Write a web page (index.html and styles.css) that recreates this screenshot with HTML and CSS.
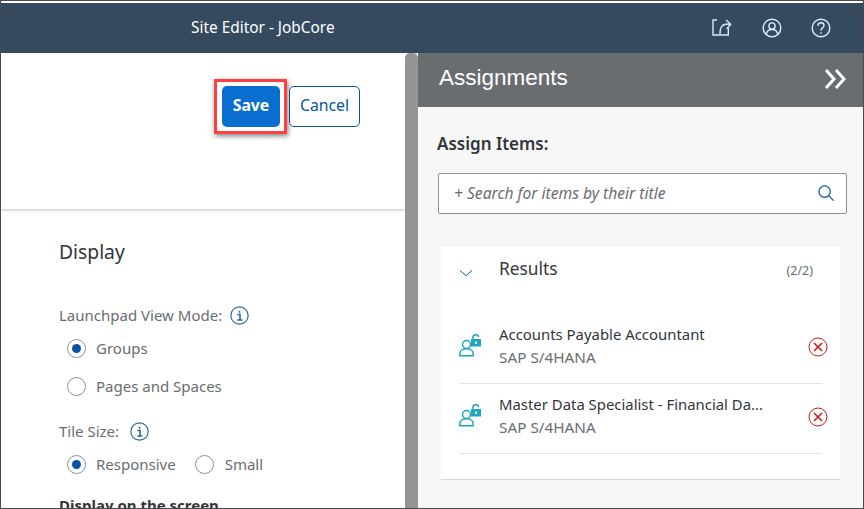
FILE: index.html
```html
<!DOCTYPE html>
<html lang="en">
<head>
    <meta charset="UTF-8">
    <meta name="viewport" content="width=device-width, initial-scale=1.0">
    <title>Site Editor - JobCore</title>
    <link rel="stylesheet" href="styles.css">
</head>
<body>
    <div class="frame">
        <header class="shell">
            <div class="shell-title">Site Editor - JobCore</div>
            <div class="shell-icons">
                <svg class="shell-icon" viewBox="0 0 20 20"><path d="M5 2H1v15h15.300v-7"/><path d="M8 16c-.3-5 1.500-9.700 6-9.700h4.500M14 2l4.700 4.300-4 4.400"/></svg>
                <svg class="shell-icon" viewBox="0 0 20 20"><circle cx="10" cy="10" r="8.800"/><circle cx="10" cy="8" r="3.100"/><path d="M4.300 16.500c.3-3 2.500-5 5.700-5s5.400 2 5.700 5"/></svg>
                <svg class="shell-icon" viewBox="0 0 20 20"><circle cx="10" cy="10" r="8.800"/><path d="M7 7.800c0-1.800 1.300-3 3-3s3 1.100 3 2.700c0 2.400-3 2.400-3 5"/><path d="M10 14.200v1.500"/></svg>
            </div>
        </header>
        <main class="content">
            <section class="editor">
                <div class="toolbar">
                    <div class="save-mark"><button class="btn btn-save">Save</button></div>
                    <button class="btn btn-cancel">Cancel</button>
                </div>
                <div class="form">
                    <h2 class="form-title">Display</h2>
                    <div class="field-label">Launchpad View Mode:
                        <svg class="info" viewBox="0 0 18 18"><circle cx="9" cy="9" r="8.200"/><path class="info-i" d="M7 8h2.500v5M6.800 13.200h5M9 4.500v1.800"/></svg>
                    </div>
                    <div class="radio-row"><span class="radio on"></span>Groups</div>
                    <div class="radio-row"><span class="radio"></span>Pages and Spaces</div>
                    <div class="field-label second">Tile Size:
                        <svg class="info" viewBox="0 0 18 18"><circle cx="9" cy="9" r="8.200"/><path class="info-i" d="M7 8h2.500v5M6.800 13.200h5M9 4.500v1.800"/></svg>
                    </div>
                    <div class="radio-row inline">
                        <span class="radio on"></span>Responsive
                        <span class="radio small-radio"></span>Small
                    </div>
                    <div class="sub-title">Display on the screen</div>
                </div>
            </section>
            <div class="scrollbar"></div>
            <aside class="assign">
                <div class="assign-head">
                    <span>Assignments</span>
                    <svg class="collapse" viewBox="0 0 22 22"><path d="M2 2l8 9-8 9M12 2l8 9-8 9"/></svg>
                </div>
                <div class="assign-body">
                    <div class="assign-label">Assign Items:</div>
                    <div class="search">
                        <span class="search-text">+ Search for items by their title</span>
                        <svg class="search-icon" viewBox="0 0 18 18"><circle cx="7" cy="7" r="6"/><path d="M11.500 11.500L16.500 16.500"/></svg>
                    </div>
                    <div class="results">
                        <div class="results-head">
                            <svg class="chevron" viewBox="0 0 16 9"><path d="M1 1.500l7 6 7-6"/></svg>
                            <span class="results-title">Results</span>
                            <span class="results-count">(2/2)</span>
                        </div>
                        <div class="item">
                            <svg class="role" viewBox="0 0 22 23"><circle cx="7.500" cy="10.500" r="4"/><path d="M.8 21.800v-2.300c0-3 3-4.700 6.700-4.700s6.700 1.700 6.700 4.700v2.300z"/><path d="M14 5V3.200c0-3.200 5.300-3.200 5.500-.2"/><path class="lock" d="M12 5h10v7.500H12z"/><path class="keyhole" d="M17 7.500v2.500"/></svg>
                            <div class="item-text">
                                <div class="item-name">Accounts Payable Accountant</div>
                                <div class="item-app">SAP S/4HANA</div>
                            </div>
                            <svg class="remove" viewBox="0 0 20 20"><circle cx="10" cy="10" r="9"/><path class="remove-x" d="M6 6l8 8M14 6l-8 8"/></svg>
                        </div>
                        <div class="item">
                            <svg class="role" viewBox="0 0 22 23"><circle cx="7.500" cy="10.500" r="4"/><path d="M.8 21.800v-2.300c0-3 3-4.700 6.700-4.700s6.700 1.700 6.700 4.700v2.300z"/><path d="M14 5V3.200c0-3.200 5.300-3.200 5.500-.2"/><path class="lock" d="M12 5h10v7.500H12z"/><path class="keyhole" d="M17 7.500v2.500"/></svg>
                            <div class="item-text">
                                <div class="item-name">Master Data Specialist - Financial Da...</div>
                                <div class="item-app">SAP S/4HANA</div>
                            </div>
                            <svg class="remove" viewBox="0 0 20 20"><circle cx="10" cy="10" r="9"/><path class="remove-x" d="M6 6l8 8M14 6l-8 8"/></svg>
                        </div>
                    </div>
                </div>
            </aside>
        </main>
    </div>
</body>
</html>
```

FILE: styles.css
```css
* {
    box-sizing: border-box;
}
html, body {
    margin: 0;
    height: 100%;
    overflow: hidden;
}
body {
    font-family: "Noto Sans", sans-serif;
    background-color: #fff;
}
.frame {
    width: 864px;
    height: 509px;
    border: 1px solid #4a4a4a;
    padding-top: 2px;
    display: flex;
    flex-direction: column;
    background-color: #fff;
    overflow: hidden;
}
.shell {
    flex: none;
    height: 50px;
    background-color: #354a5f;
    display: flex;
    align-items: center;
    justify-content: space-between;
    color: #fff;
}
.shell-title {
    margin-left: 190px;
    padding-bottom: 2px;
    font-size: 15.400px;
}
.shell-icons {
    display: flex;
    gap: 29.500px;
    margin-right: 32px;
}
.shell-icon {
    width: 20px;
    height: 20px;
    fill: none;
    stroke: #d8ecff;
    stroke-width: 1.400;
}
.content {
    flex: 1;
    display: flex;
    min-height: 0;
}
.editor {
    width: 404px;
    flex: none;
    overflow: hidden;
}
.toolbar {
    height: 156px;
    display: flex;
    justify-content: flex-end;
    align-items: flex-start;
    gap: 2px;
    padding: 33px 45px 0 0;
    box-shadow: 0 1px 3px rgba(0, 0, 0, 0.25);
}
.btn {
    height: 41px;
    padding: 0 0 3px;
    border-radius: 5px;
    font-family: "Noto Sans", sans-serif;
    font-size: 15.800px;
}
.save-mark {
    border: 3px solid #ff4040;
    padding: 4px 4px 4px 5px;
    margin-top: -7px;
    box-shadow: 1px 2px 5px rgba(0, 0, 0, 0.5);
}
.btn-save {
    display: block;
    width: 58px;
    background-color: #0a6ed1;
    border: none;
    color: #fff;
    font-weight: 700;
}
.btn-cancel {
    width: 71px;
    background-color: #fff;
    border: 1px solid #0854a0;
    color: #0854a0;
}
.form {
    padding: 28px 0 0 58px;
    color: #6a6d70;
    font-size: 15px;
}
.form-title {
    margin: 0;
    font-size: 19.300px;
    font-weight: 400;
    line-height: 30px;
    color: #32363a;
}
.field-label {
    display: flex;
    align-items: center;
    gap: 8px;
    margin-top: 37px;
    margin-bottom: 3px;
    height: 22px;
}
.field-label.second {
    gap: 11px;
    margin-top: 15px;
    margin-bottom: 0;
}
.info {
    width: 19px;
    height: 19px;
    fill: none;
    stroke: #2f6497;
    stroke-width: 1.100;
}
.info-i {
    stroke-width: 1.500;
}
.radio-row {
    display: flex;
    align-items: center;
    height: 38px;
    padding-left: 8px;
}
.radio-row.inline {
    height: 44px;
}
.radio {
    width: 19px;
    height: 19px;
    border: 1px solid #89919a;
    border-radius: 50%;
    margin-right: 10px;
    background-color: #fff;
    display: flex;
    align-items: center;
    justify-content: center;
}
.radio.on::after {
    content: "";
    width: 9px;
    height: 9px;
    border-radius: 50%;
    background-color: #0854a0;
}
.small-radio {
    margin-left: 19px;
    margin-right: 11px;
}
.sub-title {
    font-weight: 700;
    color: #32363a;
    margin-top: 9px;
    line-height: 20px;
}
.scrollbar {
    width: 13px;
    flex: none;
    background-color: #949494;
    border-radius: 5px 5px 0 0;
}
.assign {
    flex: 1;
    background-color: #f7f7f7;
    min-width: 0;
}
.assign-head {
    height: 54px;
    background-color: #6a6d70;
    color: #fff;
    font-family: "Liberation Sans", sans-serif;
    font-size: 22.500px;
    display: flex;
    align-items: center;
    justify-content: space-between;
    padding: 0 17px 4px 21px;
}
.collapse {
    width: 22px;
    height: 22px;
    margin-top: 2px;
    fill: none;
    stroke: #fff;
    stroke-width: 3;
}
.assign-body {
    padding: 0 16px 0 20px;
}
.assign-label {
    font-size: 17px;
    font-weight: 600;
    color: #32363a;
    margin-top: 26px;
    margin-left: -1px;
    line-height: 22px;
}
.search {
    margin-top: 18px;
    height: 41px;
    border: 1px solid #89919a;
    border-radius: 2px;
    background-color: #fff;
    display: flex;
    align-items: center;
    justify-content: space-between;
    padding: 0 11px 0 15px;
}
.search-text {
    font-style: italic;
    font-size: 15.600px;
    padding-bottom: 2px;
    color: #6a6d70;
}
.search-icon {
    width: 17px;
    height: 17px;
    fill: none;
    stroke: #0854a0;
    stroke-width: 1.300;
}
.results {
    margin: 33px 7px 0 3px;
    height: 233px;
    background-color: #fff;
    border-bottom: 1px solid #d9d9d9;
    padding: 0 18px;
}
.results-head {
    height: 67px;
    display: flex;
    align-items: flex-start;
    padding-top: 10px;
}
.chevron {
    width: 14px;
    height: 8px;
    margin-top: 12px;
    fill: none;
    stroke: #0854a0;
    stroke-width: 1.100;
}
.results-title {
    margin-left: 26px;
    font-size: 17.300px;
    line-height: 24px;
    color: #32363a;
}
.results-count {
    margin-left: auto;
    margin-right: 9px;
    margin-top: 4px;
    font-size: 12.500px;
    line-height: 20px;
    color: #6a6d70;
}
.item {
    height: 70px;
    display: flex;
    align-items: center;
    border-bottom: 1px solid #e4e4e4;
}
.role {
    width: 22px;
    height: 23px;
    fill: none;
    stroke: #1fa6b8;
    stroke-width: 1.500;
    margin-bottom: 7px;
}
.lock {
    fill: #1fa6b8;
    stroke: none;
}
.keyhole {
    stroke: #fff;
    stroke-width: 1.600;
}
.item-text {
    margin-left: 18px;
    padding-bottom: 6px;
    flex: 1;
}
.item-name {
    font-size: 14.900px;
    line-height: 23px;
    color: #32363a;
}
.item-app {
    font-size: 15.300px;
    line-height: 23px;
    color: #6a6d70;
}
.remove {
    width: 20px;
    height: 20px;
    fill: none;
    stroke: #cc1919;
    stroke-width: 1;
    margin-right: -6px;
    margin-bottom: 4px;
}
.remove-x {
    stroke-width: 1.600;
}
```
